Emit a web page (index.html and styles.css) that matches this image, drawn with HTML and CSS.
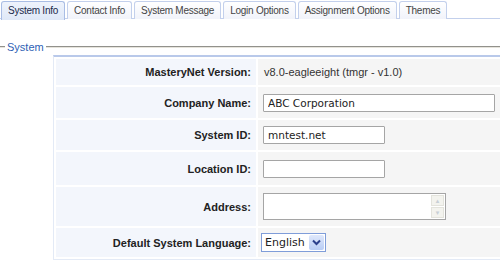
FILE: index.html
```html
<!DOCTYPE html>
<html>

<head>
    <title>System Settings</title>
    <link rel="stylesheet" href="styles.css">
</head>

<body>
    <ul class="tabs">
        <li class="active">System Info</li>
        <li>Contact Info</li>
        <li>System Message</li>
        <li>Login Options</li>
        <li>Assignment Options</li>
        <li>Themes</li>
    </ul>

    <fieldset class="section">
        <legend>System</legend>
        <table class="form-table">
            <tr class="row-version">
                <th>MasteryNet Version:</th>
                <td class="plain">v8.0-eagleeight (tmgr - v1.0)</td>
            </tr>
            <tr class="row-company">
                <th>Company Name:</th>
                <td><input type="text" class="wide" value="ABC Corporation"></td>
            </tr>
            <tr class="row-sysid">
                <th>System ID:</th>
                <td><input type="text" class="short" value="mntest.net"></td>
            </tr>
            <tr class="row-location">
                <th>Location ID:</th>
                <td><input type="text" class="short" value=""></td>
            </tr>
            <tr class="row-address">
                <th>Address:</th>
                <td>
                    <div class="textarea">
                        <div class="scroll">
                            <span class="arrow">&#9650;</span>
                            <span class="arrow">&#9660;</span>
                        </div>
                    </div>
                </td>
            </tr>
            <tr class="row-lang">
                <th>Default System Language:</th>
                <td>
                    <div class="select">
                        <span class="select-text">English</span>
                        <span class="select-btn">
                            <svg width="9" height="7" viewBox="0 0 9 7">
                                <path d="M1 1.5 L4.5 5 L8 1.5" fill="none" stroke="#2b3f8c" stroke-width="2"/>
                            </svg>
                        </span>
                    </div>
                </td>
            </tr>
        </table>
    </fieldset>
</body>

</html>
```

FILE: styles.css
```css
body {
    margin: 0;
    font-family: "Liberation Sans", Arial, sans-serif;
    font-size: 11px;
    color: #222;
    background-color: #fff;
    overflow: hidden;
}

.tabs {
    display: flex;
    gap: 2px;
    list-style: none;
    margin: 0;
    padding: 1px 0 0 1px;
    height: 17px;
    border-bottom: 1px solid #c3d0ec;
    font-size: 10px;
    letter-spacing: -0.25px;
}

.tabs li {
    padding: 3px 6px 0 6px;
    height: 14px;
    border: 1px solid #c3d0ec;
    border-bottom: none;
    border-radius: 3px 3px 0 0;
    background: linear-gradient(#ffffff, #f1f3fa);
    color: #444;
    white-space: nowrap;
}

.tabs li.active {
    height: 15px;
    background: linear-gradient(#eef3fc, #dfe8f7);
    border-color: #a9bde4;
    color: #1a2a4a;
}

.section {
    margin: 22px 0 0 -3px;
    padding: 0 0 6px 0;
    border: none;
    border-top: 2px groove #e6e4dc;
    border-bottom: 2px solid #d6d3c4;
}

.section legend {
    margin-left: 8px;
    padding: 0 2px;
    color: #2e5fb5;
    font-size: 11px;
}

.form-table {
    margin: 2px 0 0 56px;
    width: 470px;
    border-spacing: 2px;
    border-top: 2px solid #b9c9ea;
    border-left: 1px solid #e3eaf6;
    border-bottom: 1px solid #e3eaf6;
}

.form-table th {
    width: 195px;
    padding: 0 5px 0 0;
    text-align: right;
    font-weight: bold;
    background-color: #f3f6fc;
    color: #222;
}

.form-table td {
    padding: 0 0 0 5px;
    background-color: #f5f5f5;
}

.form-table td.plain {
    padding-left: 6px;
    color: #333;
}

.row-version { height: 26px; }
.row-company { height: 31px; }
.row-sysid { height: 30px; }
.row-location { height: 33px; }
.row-address { height: 39px; }
.row-lang { height: 29px; }

input {
    font-family: "DejaVu Sans", Verdana, sans-serif;
    font-size: 10.5px;
    color: #222;
    height: 16px;
    padding: 0 4px;
    border: 1px solid #a5a5a5;
    border-radius: 1px;
    background-color: #fff;
    box-sizing: content-box;
}

input.wide { width: 222px; }
input.short { width: 112px; }

.textarea {
    position: relative;
    width: 181px;
    height: 25px;
    border: 1px solid #a5a5a5;
    background-color: #fff;
}

.scroll {
    position: absolute;
    top: 1px;
    right: 1px;
    width: 13px;
    display: flex;
    flex-direction: column;
    gap: 1px;
}

.arrow {
    height: 11px;
    font-size: 6px;
    line-height: 11px;
    text-align: center;
    color: #c8cfd6;
    background-color: #f3f3ee;
    border: 1px solid #e3e3dc;
    box-sizing: border-box;
}

.select {
    display: inline-flex;
    align-items: center;
    margin-left: -2px;
    height: 17px;
    border: 1px solid #7f9dd9;
    background-color: #fff;
    font-family: "DejaVu Sans", Verdana, sans-serif;
    font-size: 11px;
    color: #222;
}

.select-text {
    padding: 0 4px 0 3px;
}

.select-btn {
    display: flex;
    align-items: center;
    justify-content: center;
    width: 15px;
    height: 15px;
    margin-right: 1px;
    background: linear-gradient(#dfe8fb, #b9cdf5);
    border-radius: 2px;
}
```
